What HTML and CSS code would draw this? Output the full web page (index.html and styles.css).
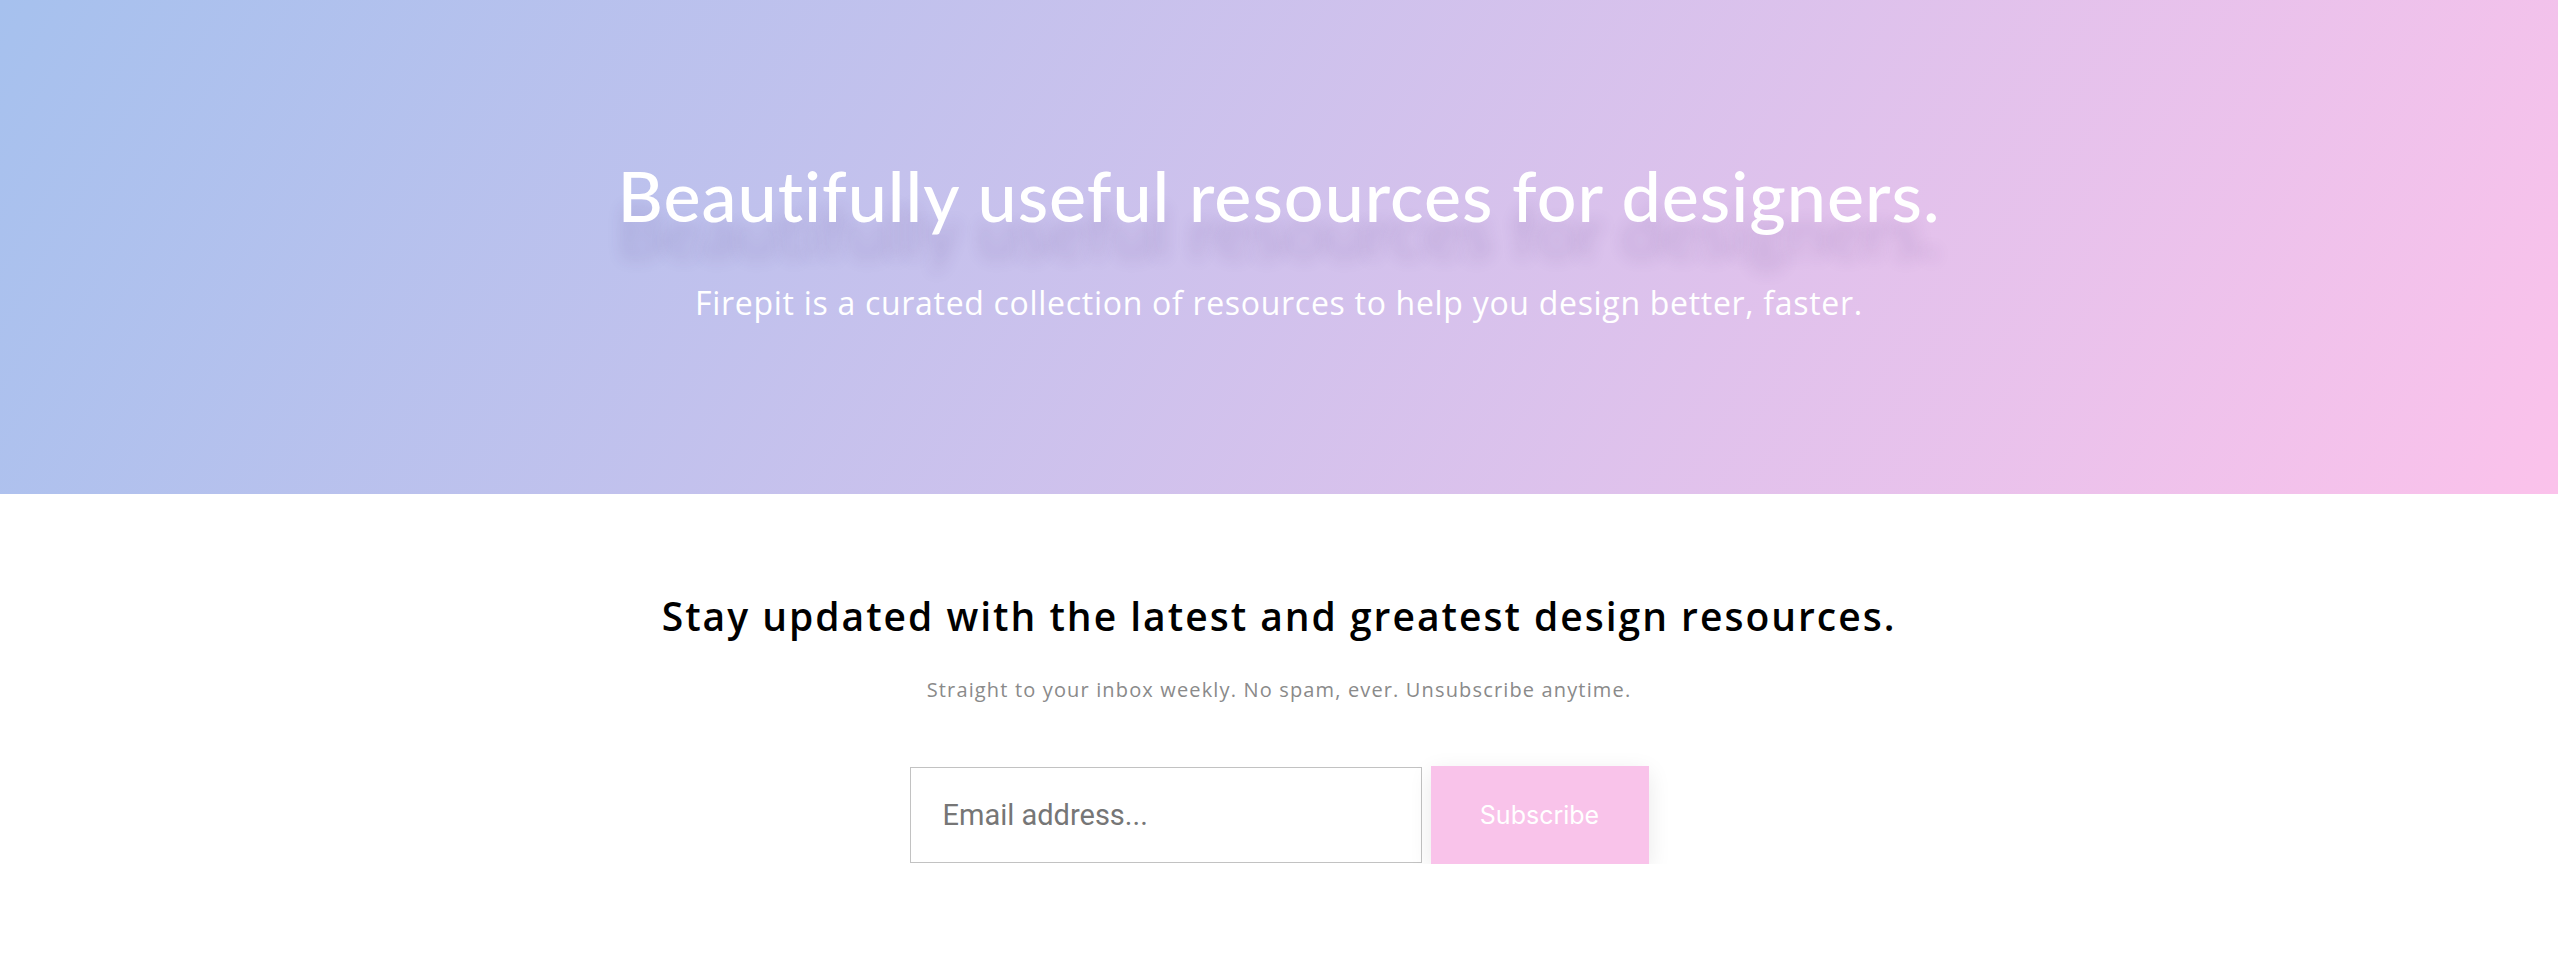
FILE: index.html
```html
<!DOCTYPE html>
<html lang="en">
<head>
<meta charset="utf-8">
<title>Firepit</title>
<link rel="stylesheet" href="styles.css">
</head>
<body>
<header class="hero">
  <h1 class="hero-title">Beautifully useful resources for designers.</h1>
  <p class="hero-sub">Firepit is a curated collection of resources to help you design better, faster.</p>
</header>
<section class="newsletter">
  <h2 class="nl-title">Stay updated with the latest and greatest design resources.</h2>
  <p class="nl-sub">Straight to your inbox weekly. No spam, ever. Unsubscribe anytime.</p>
  <form class="nl-form" onsubmit="return false;">
    <input class="nl-input" type="email" placeholder="Email address...">
    <button class="nl-button" type="submit">Subscribe</button>
  </form>
</section>
</body>
</html>
```
FILE: styles.css
```css
* { box-sizing: border-box; }
html, body { margin: 0; padding: 0; background: #fff; }
body {
  font-family: Lato, "Open Sans", sans-serif;
  font-variant-ligatures: none;
}

.hero {
  height: 494px;
  background: linear-gradient(120deg, #a6c1ee 0%, #fbc2eb 100%);
  display: flex;
  flex-direction: column;
  align-items: center;
  padding-top: 160px;
}
.hero-title {
  margin: 0;
  font-size: 70px;
  line-height: 1;
  font-weight: 500;
  letter-spacing: 1px;
  color: #fff;
  text-shadow: 0 36px 16px rgba(70, 40, 120, 0.17);
}
.hero-sub {
  margin: 57px 0 0;
  font-family: "Open Sans", Lato, sans-serif;
  font-size: 32px;
  line-height: 1;
  font-weight: 400;
  letter-spacing: 0.7px;
  color: #fff;
}

.newsletter {
  display: flex;
  flex-direction: column;
  align-items: center;
  padding-top: 102px;
}
.nl-title {
  margin: 0;
  font-family: "Open Sans", Lato, sans-serif;
  font-size: 39px;
  line-height: 1;
  font-weight: 600;
  letter-spacing: 2px;
  color: #000;
}
.nl-sub {
  margin: 45px 0 0;
  font-family: "Open Sans", Lato, sans-serif;
  font-size: 20px;
  line-height: 1;
  letter-spacing: 1.15px;
  color: #8a8a8a;
}
.nl-form {
  margin-top: 66px;
  display: flex;
  align-items: center;
  gap: 9px;
}
.nl-input {
  width: 512px;
  height: 96px;
  border: 1px solid #c2c2c2;
  border-radius: 0;
  padding: 0 0 0 32px;
  font-family: Roboto, "Liberation Sans", sans-serif;
  font-size: 29px;
  color: #333;
  outline: none;
}
.nl-input::placeholder { color: #767676; }
.nl-button {
  width: 218px;
  height: 98px;
  border: 0;
  background: #f9c3ea;
  color: #fff;
  font-family: Inter, Roboto, sans-serif;
  font-size: 25px;
  font-weight: 400;
  box-shadow: 0 6px 22px rgba(0, 0, 0, 0.09);
  cursor: pointer;
}
```
